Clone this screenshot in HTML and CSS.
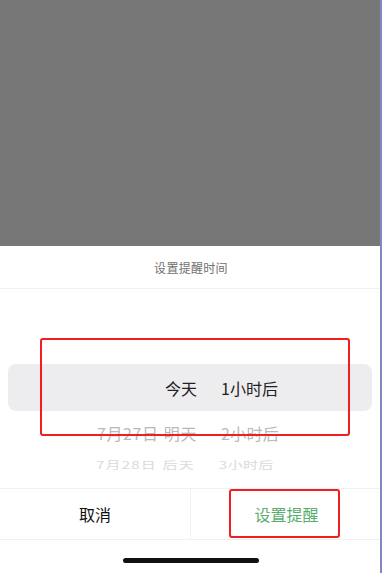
FILE: index.html
```html
<!DOCTYPE html>
<html lang="zh-CN">
<head>
<meta charset="utf-8">
<link rel="stylesheet" href="styles.css">
</head>
<body>
<div class="screen">
  <div class="mask"></div>
  <div class="sheet">
    <div class="title">设置提醒时间</div>
    <div class="picker">
      <div class="row selected"><span class="c1">今天</span><span class="c2">1小时后</span></div>
      <div class="row near"><span class="c1">7月27日 明天</span><span class="c2">2小时后</span></div>
      <div class="row far"><span class="c1">7月28日 后天</span><span class="c2">3小时后</span></div>
    </div>
    <div class="actions">
      <div class="btn cancel">取消</div>
      <div class="btn confirm">设置提醒</div>
    </div>
    <div class="home"><div class="bar"></div></div>
  </div>
  <div class="mark mark-picker"></div>
  <div class="mark mark-btn"></div>
  <div class="edge"></div>
</div>
</body>
</html>
```

FILE: styles.css
```css
* { box-sizing: border-box; }
html, body { margin: 0; padding: 0; background: #fff; }
body { font-family: "Noto Sans CJK SC", "Noto Sans", sans-serif; }
.screen { position: relative; width: 382px; height: 573px; overflow: hidden; display: flex; flex-direction: column; }
.mask { height: 246px; background: #777777; flex: none; }
.sheet { flex: 1; display: flex; flex-direction: column; background: #fff; }
.title { height: 43px; display: flex; align-items: center; justify-content: center; font-size: 12px; color: #707070; border-bottom: 1px solid #f0f0f0; letter-spacing: 0.3px; }
.picker { height: 199px; padding: 75px 10px 0 8px; display: flex; flex-direction: column; }
.row { display: grid; grid-template-columns: 189px 1fr; column-gap: 24px; align-items: center; font-size: 16px; line-height: 1; white-space: nowrap; }
.row .c1 { text-align: right; }
.row.selected { height: 47px; background: #ededef; border-radius: 8px; color: #222; }
.row.near { height: 41px; padding-top: 3px; color: #b9b9b9; }
.row.near .c1 { letter-spacing: 0.6px; word-spacing: 1px; }
.row.near .c2 { letter-spacing: 0.3px; }
.row.far { height: 18px; color: #dadada; transform: scaleY(0.7); font-size: 15px; margin-top: 3px; }
.row.far .c1 { letter-spacing: 1.2px; padding-right: 2px; word-spacing: 1px; }
.row.far .c2 { letter-spacing: 0.3px; margin-left: -2px; }
.actions { height: 52px; display: flex; border-top: 1px solid #f0f0f0; border-bottom: 1px solid #f0f0f0; }
.btn { flex: none; display: flex; align-items: center; justify-content: center; font-size: 16px; }
.cancel { width: 191px; color: #111; border-right: 1px solid #f2f2f2; }
.confirm { flex: 1; color: #5aad6f; }
.home { flex: 1; display: flex; justify-content: center; padding-top: 18px; }
.bar { width: 136px; height: 5px; border-radius: 3px; background: #111; }
.mark { position: absolute; border: 2.5px solid #f01e1e; border-radius: 3px; }
.mark-picker { left: 40px; top: 338px; width: 310px; height: 98px; }
.mark-btn { left: 229px; top: 489px; width: 111px; height: 49px; }
.edge { position: absolute; right: 0; top: 0; width: 2px; height: 573px; background: #8585c4; }
```
